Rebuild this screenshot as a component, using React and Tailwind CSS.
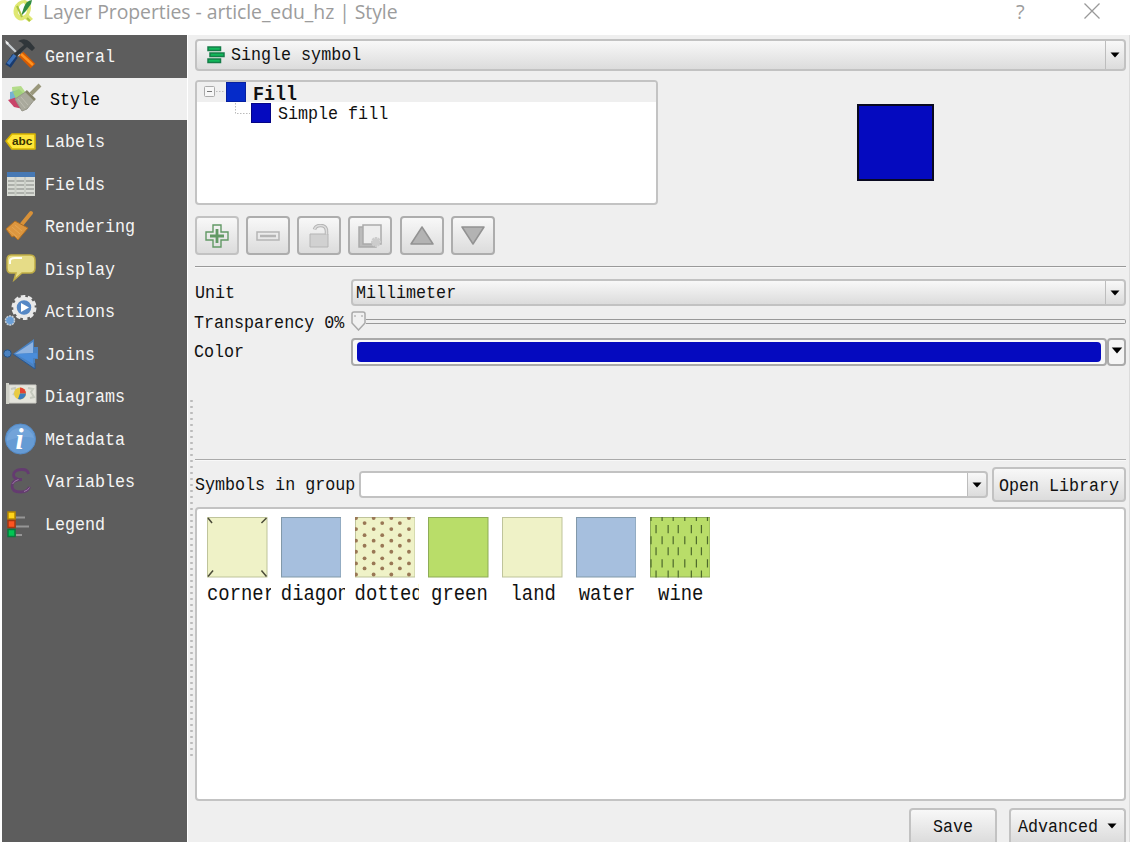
import React from "react";

const btn = "border-2 border-[#c2c2c2] rounded-[4px] bg-gradient-to-b from-[#f8f8f8] to-[#dcdcdc]";

function Caret({ className = "" }) {
  return (
    <svg className={className} width="10" height="6" viewBox="0 0 10 6">
      <path d="M0.5 0.5h9L5 5.5z" fill="#000" />
    </svg>
  );
}

function Text({ children, className = "" }) {
  return <span className={`block origin-center translate-y-px scale-y-[1.12] whitespace-pre ${className}`}>{children}</span>;
}

const icons = {
  General: (
    <>
      <path d="M6 7l14 14" stroke="#c9ced2" strokeWidth="2.2" />
      <path d="M5 5l4 3-2 2z" fill="#f1f1f1" />
      <path d="M18 6q7-4 12 1l5 6-3 3-5-4-13 12-3-3L24 10q-2-3-6-4z" fill="#30363a" />
      <path d="M15 21L8 31" stroke="#183b70" strokeWidth="6.5" />
      <path d="M15 20L8 29" stroke="#3e72b8" strokeWidth="3.5" />
      <path d="M21 19l12 12" stroke="#d45b04" strokeWidth="6.5" />
      <path d="M21 19l12 11" stroke="#ff921f" strokeWidth="2.5" />
    </>
  ),
  Style: (
    <>
      <path d="M12 9l9-1 5 7-13 6z" fill="#b4dc8a" />
      <path d="M10 14l9-2 2 10-11 2z" fill="#77b3d3" />
      <path d="M8 22l9-3 6 12-9-2z" fill="#c94469" />
      <path d="M13 14l6-3 5 5-8 5z" fill="#9fd17b" />
      <path d="M15 21L27 13l8 8-8 10-5 2z" fill="#a9a99c" stroke="#98978a" />
      <path d="M18 21l7 9m-4-11l7 8" stroke="#bdbcb0" />
      <path d="M31 16L40 7" stroke="#9a987c" strokeWidth="4" />
      <path d="M26 13l9 9" stroke="#858369" strokeWidth="2.5" />
    </>
  ),
  Labels: (
    <>
      <path d="M6 21l6-7h23v15H12z" fill="#ffe63a" stroke="#d8b500" strokeWidth="1.6" strokeLinejoin="round" />
      <text x="12" y="25" fontSize="11.8" fontWeight="bold" fontFamily="Liberation Sans, sans-serif" fill="#383200">abc</text>
    </>
  ),
  Fields: (
    <>
      <path d="M7 9h28v24H7z" fill="#d8dbd5" />
      <path d="M7 9h28v5H7z" fill="#4779b4" />
      <path d="M8 18h26M8 22h26M8 26h26M8 30h26" stroke="#9fa29d" strokeWidth="1.5" />
      <path d="M15.5 14v19M25 14v19" stroke="#c7cbc4" strokeWidth="2" />
    </>
  ),
  Rendering: (
    <>
      <path d="M22 19L31 8" stroke="#d79139" strokeWidth="4" strokeLinecap="round" />
      <path d="M6 24l9-8 13 7-10 12-4-4-2 1z" fill="#dc963f" stroke="#af6d20" />
      <path d="M9 25l8 7m-5-10l8 7m-5-9l7 6" stroke="#e5a653" />
    </>
  ),
  Display: (
    <>
      <path d="M11 7h19q5 0 5 5v8q0 5-5 5h-8l-8 7 2-7h-5q-4 0-4-5v-8q0-5 4-5z" fill="#e6dc87" stroke="#c0ad46" strokeWidth="1.5" />
      <path d="M10 16v-3q0-3 5-3h7" fill="none" stroke="#fffef0" strokeWidth="2" />
    </>
  ),
  Actions: (
    <>
      <circle cx="24" cy="17.500" r="10.500" fill="none" stroke="#e9e9e9" strokeWidth="4" strokeDasharray="4.2 2.397" />
      <circle cx="24" cy="17.500" r="9" fill="#5688c5" stroke="#e9e9e9" strokeWidth="3.500" />
      <path d="M21 13l8 4.500-8 4.500z" fill="#fff" />
      <circle cx="10" cy="30.500" r="4.500" fill="#6a9ed6" stroke="#c4cbd1" strokeWidth="1.500" strokeDasharray="2 .8" />
    </>
  ),
  Joins: (
    <>
      <path d="M13 21L34 6v8h4v12h-3v10z" fill="#4a82c2" />
      <path d="M15 21L33 9v11z" fill="#8fb3e0" />
      <path d="M16 21l21-1v5h-4v6z" fill="#4a8ddb" />
      <path d="M13 21L35 36v-6" fill="none" stroke="#285892" />
      <circle cx="7.500" cy="20.500" r="3.700" fill="#4c82c0" stroke="#265487" />
    </>
  ),
  Diagrams: (
    <>
      <path d="M9 10h27v18H9z" fill="#e4e4dc" stroke="#cfcfc8" />
      <path d="M6 8h3v21H6z" fill="#d0d1c8" />
      <path d="M11 14l4-1 1 3-3 4M28 13l5 1-2 3 3 5-4 1" fill="none" stroke="#c6cabf" strokeWidth="2" />
      <circle cx="20" cy="18.500" r="6" fill="#e9cb43" />
      <path d="M20 18.500v-6a6 6 0 0 1 6 6z" fill="#e34234" />
      <path d="M20 18.500h6a6 6 0 0 1-8 5.600z" fill="#397bc0" />
    </>
  ),
  Metadata: (
    <>
      <circle cx="20.500" cy="21" r="15" fill="#669bd4" stroke="#548bc8" />
      <path d="M7 20a14 14 0 0 1 27 0q-12-3-27 3z" fill="#80addd" opacity=".5" />
      <text x="15.500" y="31" fontSize="29" fontWeight="bold" fontStyle="italic" fontFamily="Liberation Serif, serif" fill="#fff">i</text>
    </>
  ),
  Variables: (
    <>
      <path d="M28.500 14Q28 9.500 22 9.500C16 9.500 13.500 12 13.500 15C13.500 18 17 19.500 22 19.500C15 19.500 12 22 12 26C12 30.500 16 32 20.500 32C26 32 28.500 30 29.500 27" fill="none" stroke="#643b70" strokeWidth="2.800" />
      <path d="M12.500 24q2-3.500 6-4.500M24 31.500q4-1 5.500-4" fill="none" stroke="#9a7ba2" />
    </>
  ),
  Legend: (
    <>
      <path d="M16 14.500h9M16 23.500h13M16 32h6" stroke="#969696" strokeWidth="2.200" />
      <path d="M8 9h7v7H8z" fill="#ffd51b" stroke="#b68900" strokeWidth="1.500" />
      <path d="M8 17.500h7v7H8z" fill="#ff5421" stroke="#a63710" strokeWidth="1.500" />
      <path d="M8 26.500h7v7H8z" fill="#00c653" stroke="#087a3c" strokeWidth="1.500" />
    </>
  ),
};

const nav = ["General", "Style", "Labels", "Fields", "Rendering", "Display", "Actions", "Joins", "Diagrams", "Metadata", "Variables", "Legend"];

function Combo({ children, className = "", plain = false }) {
  return (
    <div className={`flex overflow-hidden ${btn} ${className}`}>
      <div className={`flex flex-1 items-center ${plain ? "bg-white" : ""}`}>{children}</div>
      <div className="flex w-[19px] items-center justify-center border-l border-[#bdbdbd]">
        <Caret />
      </div>
    </div>
  );
}

const tools = [
  <g fill="none" stroke="#629965" strokeWidth="1.400">
    <path d="M8 1h8v7h7v8h-7v7H8v-7H1V8h7z" />
    <path d="M12 5v14M5 12h14" strokeWidth="2.800" />
  </g>,
  <g fill="none" stroke="#b5b5b5" strokeWidth="1.500">
    <path d="M1 8h22v8H1z" />
    <path d="M4 12h16" strokeWidth="2.500" />
  </g>,
  <g fill="none" stroke="#b5b5b5">
    <path d="M3 10h18v13H3z" fill="#d1d1d1" />
    <path d="M7.500 5.500q1-4 6-4 6 0 6 6v3" strokeWidth="3.500" />
    <path d="M7.500 5.500q1-4 6-4 6 0 6 6v3" stroke="#dedede" strokeWidth="1.500" />
  </g>,
  <g fill="#ededed" stroke="#aaa" strokeWidth="1.500">
    <path d="M1 3h17v20H1z" fill="#bbb" />
    <path d="M5 1h18v19H5z" />
    <path d="M18 13v10M13 18h10M14.500 14.500l7 7m0-7l-7 7" stroke="#ccc" strokeWidth="2.500" />
  </g>,
  <path d="M12 3l11 17H1z" fill="#b3b3b3" stroke="#929292" strokeWidth="1.500" strokeLinejoin="round" />,
  <path d="M12 20L1 3h22z" fill="#b3b3b3" stroke="#929292" strokeWidth="1.500" strokeLinejoin="round" />,
];

const dots = [];
[1, 12, 23.5, 34.5, 46, 57].forEach((y) => [1, 18.5, 36, 53.5].forEach((x) => dots.push([x, y])));
[6, 18, 28.5, 41, 51].forEach((y) => [9.5, 27, 44.5].forEach((x) => dots.push([x, y])));

const symbols = [
  { name: "corner", fill: "#eff2c7", edge: "#bfc49b", art: <path d="M1 1l4 5M59 1l-5 5M1 59l5-6M59 59l-5-6" stroke="#4b4b39" strokeWidth="1.500" /> },
  { name: "diagonal", fill: "#a6bfde", edge: "#8299aa" },
  { name: "dotted", fill: "#eff2c7", edge: "#bfc49b", art: dots.map(([x, y]) => <circle key={`${x}-${y}`} cx={x} cy={y} r="1.900" fill="#997755" />) },
  { name: "green", fill: "#b9dd69", edge: "#8eac57" },
  { name: "land", fill: "#eff2c7", edge: "#bfc49b" },
  { name: "water", fill: "#a6bfde", edge: "#8299aa" },
  {
    name: "wine",
    fill: "#b9dd69",
    edge: "#8eac57",
    art: <path d="M1 0v4M12 0v4M23 0v4M34.500 0v4M46 0v4M57 0v4M6 8v8M18 8v8M28 8v8M41 8v8M51 8v8M1 19v8M12 19v8M23 19v8M34.500 19v8M46 19v8M57 19v8M6 30v8M18 30v8M28 30v8M41 30v8M51 30v8M1 42v8M12 42v8M23 42v8M34.500 42v8M46 42v8M57 42v8M6 53v7M18 53v7M28 53v7M41 53v7M51 53v7" stroke="#4e6a2c" strokeWidth="1.200" />,
  },
];

export default function App() {
  return (
    <div className="flex h-[843px] w-[1130px] flex-col overflow-hidden bg-white font-['Liberation_Mono',monospace] text-[16.7px] leading-5 text-[#111]">
      <header className="flex h-[35px] shrink-0 items-start pl-[12px] text-[#9c9c9c]">
        <svg width="22" height="24" viewBox="0 0 22 24">
          <path d="M13 0Q5 0 2 8q-2 7 3 11 4 3 8 0l4 3 4-3-4-4Q21 7 17 2z" fill="#dfe873" />
          <path d="M12 3Q7 4 6 10q-1 5 4 6 5-1 5-7z" fill="#fff" />
          <path d="M20 0Q14 1 12 7l-3 9 5-5 5-7z" fill="#2f8b42" />
          <path d="M5 6l5 11M15 18l3 3" stroke="#a8c33e" strokeWidth="2" />
        </svg>
        <span className="ml-[9px] w-[960px] whitespace-pre font-['Open_Sans',sans-serif] text-[19.4px] leading-6 tracking-[-0.05px]">Layer Properties - article_edu_hz | Style</span>
        <span className="ml-[13px] w-[12px] font-['Open_Sans',sans-serif] text-[20px] leading-6">?</span>
        <svg className="ml-[56px] mt-[3px]" width="16" height="16" viewBox="0 0 16 16">
          <path d="M.5.5l15 15m0-15l-15 15" stroke="#999" strokeWidth="1.300" />
        </svg>
      </header>
      <div className="flex h-[807px] pl-[2px]">
        <nav className="w-[185px] shrink-0 bg-[#5d5d5d]">
          {nav.map((name) => (
            <div key={name} className={`flex h-[42.5px] items-center ${name === "Style" ? "bg-[#efefef] text-black" : "text-[#f5f5f5]"}`}>
              <svg className="-ml-[2px] shrink-0" width="42" height="42" viewBox="0 0 42 42">{icons[name]}</svg>
              <Text className={name === "Style" ? "ml-[8px] mt-[2px]" : "ml-[3px] mt-[2px]"}>{name}</Text>
            </div>
          ))}
        </nav>
        <div className="flex w-[8px] shrink-0 flex-col items-center border-l border-white bg-[#efefef] pt-[363px]">
          <div className="h-[360px] w-[3px] bg-[radial-gradient(circle,#bbb_1px,transparent_1.5px)] bg-[length:3px_6px]" />
        </div>
        <main className="flex w-[934px] flex-col bg-[#efefef] pr-[3px] pt-[4px]">
          <Combo className="h-[32px] shrink-0">
            <svg className="ml-[10px]" width="18" height="18" viewBox="0 0 18 18">
              <path d="M1 1h12.500v3.500H1zM3 7h14v3.500H3zM1 13h12.500v3.500H1z" fill="#11b85a" stroke="#147c48" strokeWidth="1.500" />
            </svg>
            <Text className="ml-[6px]">Single symbol</Text>
          </Combo>
          <div className="mt-[9px] flex h-[125px] shrink-0">
            <div className="w-[463px] overflow-hidden rounded-[4px] border-2 border-[#c3c3c3] bg-white">
              <div className="flex h-[20px] items-center bg-[#efefef] pl-[6px]">
                <svg width="22" height="20" viewBox="0 0 22 20">
                  <rect x="1.500" y="4.500" width="10" height="10" rx="1" fill="#f7f7f7" stroke="#aaa" />
                  <path d="M4 9.500h5" stroke="#777" />
                  <path d="M13 9.500h8" stroke="#bbb" strokeDasharray="1.500 1.500" />
                </svg>
                <div className="ml-[1px] h-[20px] w-[20px] border border-[#0620a0] bg-[#052bc9]" />
                <Text className="ml-[7px] mt-[2px] font-bold text-[18.3px]">Fill</Text>
              </div>
              <div className="flex h-[22px] items-center pl-[36px]">
                <svg width="18" height="20" viewBox="0 0 18 20">
                  <path d="M2.500 0v10.500H17" fill="none" stroke="#bbb" strokeDasharray="1.500 1.500" />
                </svg>
                <div className="h-[20px] w-[20px] border border-[#040486] bg-[#050abf]" />
                <Text className="ml-[7px] mt-[1px]">Simple fill</Text>
              </div>
            </div>
            <div className="ml-[199px] mt-[24px] h-[77px] w-[77px] border-2 border-[#090921] bg-[#050abf]" />
          </div>
          <div className="-ml-[0.5px] mt-[11px] flex h-[39px] shrink-0 gap-[7.3px]">
            {tools.map((tool, i) => (
              <div key={i} className={`flex w-[44px] items-center justify-center rounded-[4px] border-2 bg-gradient-to-b from-[#f8f8f8] to-[#dcdcdc] ${i ? "border-[#adadad]" : "border-[#c2c2c2]"}`}>
                <svg width="24" height="24" viewBox="0 0 24 24">{tool}</svg>
              </div>
            ))}
          </div>
          <div className="mt-[11px] h-[2px] shrink-0 border-t border-[#999] bg-[#f8f8f8]" />
          <div className="mt-[11px] flex h-[27px] shrink-0 items-center">
            <Text className="w-[156px]">Unit</Text>
            <Combo className="h-[27px] flex-1"><Text className="ml-[3px]">Millimeter</Text></Combo>
          </div>
          <div className="mt-[4px] flex h-[23px] shrink-0 items-center">
            <Text className="-ml-[1px] mt-[2px] w-[157px]">Transparency 0%</Text>
            <svg className="-mt-[1px] shrink-0" width="15" height="20" viewBox="0 0 15 20">
              <path d="M3 1h9q2 0 2 2v9l-6.500 7L1 12V3q0-2 2-2z" fill="#f1f1f1" stroke="#aaa" strokeWidth="1.500" />
              <path d="M3 5h2m5 0h2" stroke="#bbb" strokeWidth="1.500" />
            </svg>
            <div className="-mt-[1px] h-[5px] flex-1 rounded-r-[2px] border border-l-0 border-[#999]" />
          </div>
          <div className="mt-[5px] flex h-[28px] shrink-0 items-center">
            <Text className="-ml-[1px] w-[157px]">Color</Text>
            <div className="flex h-[28px] flex-1 rounded-[4px] border-2 border-[#aaa] bg-[#f8f8f8] p-[2px] pl-[4px] pr-[4px]">
              <div className="flex-1 rounded-[4px] bg-[#050abf]" />
            </div>
            <div className="flex h-[28px] w-[19px] justify-center rounded-[4px] border-2 border-[#aaa] bg-[#f5f5f5] pt-[7px]">
              <Caret className="h-[7px] w-[12px]" />
            </div>
          </div>
          <div className="mt-[93px] h-[2px] shrink-0 border-t border-[#aaa] bg-[#f8f8f8]" />
          <div className="mt-[6px] flex h-[35px] shrink-0 items-center">
            <Text className="w-[164px]">Symbols in group</Text>
            <Combo plain className="h-[27px] w-[629px]" />
            <div className={`ml-[4px] flex h-[35px] flex-1 items-center justify-center ${btn}`}><Text className="mt-[2px]">Open Library</Text></div>
          </div>
          <div className="mt-[5px] flex h-[294px] shrink-0 items-start gap-[9.800px] rounded-[4px] border-2 border-[#c3c3c3] bg-white pl-[10px] pt-[8px]">
            {symbols.map((s) => (
              <div key={s.name} className="w-[64px]">
                <svg width="60.500" height="60.500" viewBox="0 0 60 60">
                  <rect x=".5" y=".5" width="59" height="59" fill={s.fill} stroke={s.edge} />
                  {s.art}
                </svg>
                <div className={`mt-[3px] flex h-[24px] items-center overflow-hidden text-[18.900px] ${s.name.length > 5 ? "" : "justify-center pr-[2px]"}`}><Text>{s.name}</Text></div>
              </div>
            ))}
          </div>
          <div className="mt-[7px] flex h-[34px] shrink-0 justify-end gap-[12px]">
            <div className={`flex w-[88px] items-center justify-center rounded-b-none border-b-0 ${btn}`}><Text className="mt-[2px]">Save</Text></div>
            <div className={`flex w-[117px] items-center justify-center gap-[9px] rounded-b-none border-b-0 ${btn}`}><Text className="mt-[2px]">Advanced</Text><Caret /></div>
          </div>
        </main>
        <div className="flex-1 bg-[#dcdcdc]" />
      </div>
    </div>
  );
}
